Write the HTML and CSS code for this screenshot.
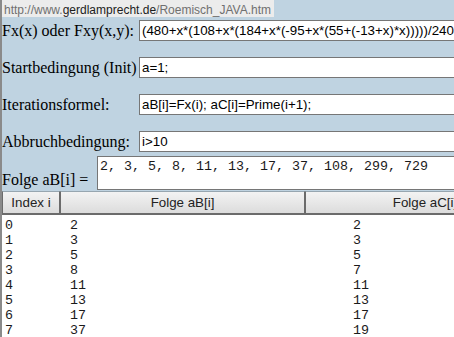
FILE: index.html
```html
<!DOCTYPE html>
<html lang="de">
<head>
<meta charset="utf-8">
<title>Roemisch JAVA</title>
<link rel="stylesheet" href="styles.css">
</head>
<body>
<div class="page">
  <div class="status"><span class="dim">http://www.</span><span class="host">gerdlamprecht.de</span><span class="dim">/Roemisch_JAVA.htm</span></div>
  <form class="form">
    <div class="row">
      <label class="lbl">Fx(x) oder Fxy(x,y):</label>
      <input class="field" type="text" value="(480+x*(108+x*(184+x*(-95+x*(55+(-13+x)*x)))))/240">
    </div>
    <div class="row">
      <label class="lbl">Startbedingung (Init)</label>
      <input class="field" type="text" value="a=1;">
    </div>
    <div class="row">
      <label class="lbl">Iterationsformel:</label>
      <input class="field" type="text" value="aB[i]=Fx(i); aC[i]=Prime(i+1);">
    </div>
    <div class="row">
      <label class="lbl">Abbruchbedingung:</label>
      <input class="field" type="text" value="i&gt;10">
    </div>
    <div class="row seq">
      <label class="lbl-seq">Folge aB[i] =</label>
      <textarea class="out" rows="2">2, 3, 5, 8, 11, 13, 17, 37, 108, 299, 729</textarea>
    </div>
  </form>
  <div class="table">
    <div class="thead">
      <div class="th c1">Index i</div>
      <div class="th c2">Folge aB[i]</div>
      <div class="th c3">Folge aC[i]</div>
    </div>
    <div class="tbody">
      <div class="tr"><span>0</span><span>2</span><span>2</span></div>
      <div class="tr"><span>1</span><span>3</span><span>3</span></div>
      <div class="tr"><span>2</span><span>5</span><span>5</span></div>
      <div class="tr"><span>3</span><span>8</span><span>7</span></div>
      <div class="tr"><span>4</span><span>11</span><span>11</span></div>
      <div class="tr"><span>5</span><span>13</span><span>13</span></div>
      <div class="tr"><span>6</span><span>17</span><span>17</span></div>
      <div class="tr"><span>7</span><span>37</span><span>19</span></div>
    </div>
  </div>
</div>
</body>
</html>
```
FILE: styles.css
```css
html, body {
  margin: 0;
  padding: 0;
  overflow: hidden;
  background: #ffffff;
}
.page {
  position: relative;
  width: 454px;
  height: 337px;
  box-sizing: border-box;
  border-left: 2px solid #8a8a8a;
  overflow: hidden;
  background: #ffffff;
}
.status {
  position: absolute;
  top: 0;
  left: 0;
  height: 17px;
  box-sizing: border-box;
  padding: 4px 3px 0 2px;
  line-height: 13px;
  font-family: "Liberation Sans", Arial, sans-serif;
  font-size: 12px;
  background: #ececec;
  white-space: nowrap;
  overflow: hidden;
  z-index: 2;
}
.dim { color: #707070; }
.host { color: #1c1c1c; }

.form {
  margin: 0;
  padding: 20px 0 1px 0;
  background: #bfd3e1;
  display: flex;
  flex-direction: column;
  gap: 16px;
}
.row {
  display: flex;
  align-items: center;
  height: 21px;
  white-space: nowrap;
}
.lbl {
  flex: none;
  width: 137px;
  font-family: "Liberation Serif", "Times New Roman", serif;
  font-size: 16px;
  line-height: 21px;
  color: #000;
}
.field {
  flex: none;
  box-sizing: border-box;
  width: 360px;
  height: 21px;
  margin: 0;
  padding: 1px 2px;
  border: 1px solid #767676;
  background: #fff;
  font-family: "Liberation Sans", Arial, sans-serif;
  font-size: 13.333px;
  color: #000;
  outline: none;
}
.row.seq {
  height: auto;
  align-items: flex-end;
  margin-top: -12px;
}
.lbl-seq {
  flex: none;
  width: 95px;
  font-family: "Liberation Serif", "Times New Roman", serif;
  font-size: 16px;
  line-height: 18px;
  padding-bottom: 1px;
  color: #000;
}
.out {
  flex: none;
  box-sizing: border-box;
  width: 400px;
  height: 34px;
  margin: 0;
  padding: 2px 2px;
  border: 1px solid #767676;
  background: #fff;
  font-family: "Liberation Mono", "Courier New", monospace;
  font-size: 13.333px;
  line-height: 15px;
  color: #1a1a1a;
  resize: none;
  overflow: hidden;
  outline: none;
}

.table {
  background: #fff;
}
.thead {
  display: flex;
  width: 560px;
  background: #bfd3e1;
}
.th {
  flex: none;
  box-sizing: border-box;
  height: 24px;
  line-height: 21px;
  text-align: center;
  font-family: "Liberation Sans", Arial, sans-serif;
  font-size: 13.333px;
  color: #222;
  background: linear-gradient(#f3f3f3, #dcdcdc);
  border-top: 1px solid #97a6b0;
  border-left: 1px solid #6b6b6b;
  border-right: 1px solid #6b6b6b;
  border-bottom: 2px solid #6b6b6b;
}
.c1 { width: 58px; }
.c2 { width: 245px; }
.c3 { width: 240px; }

.tbody {
  padding: 3px 0 0 3px;
}
.tr {
  display: grid;
  grid-template-columns: 65px 283px auto;
  font-family: "Liberation Mono", "Courier New", monospace;
  font-size: 13.333px;
  line-height: 15px;
  color: #1a1a1a;
}
```
